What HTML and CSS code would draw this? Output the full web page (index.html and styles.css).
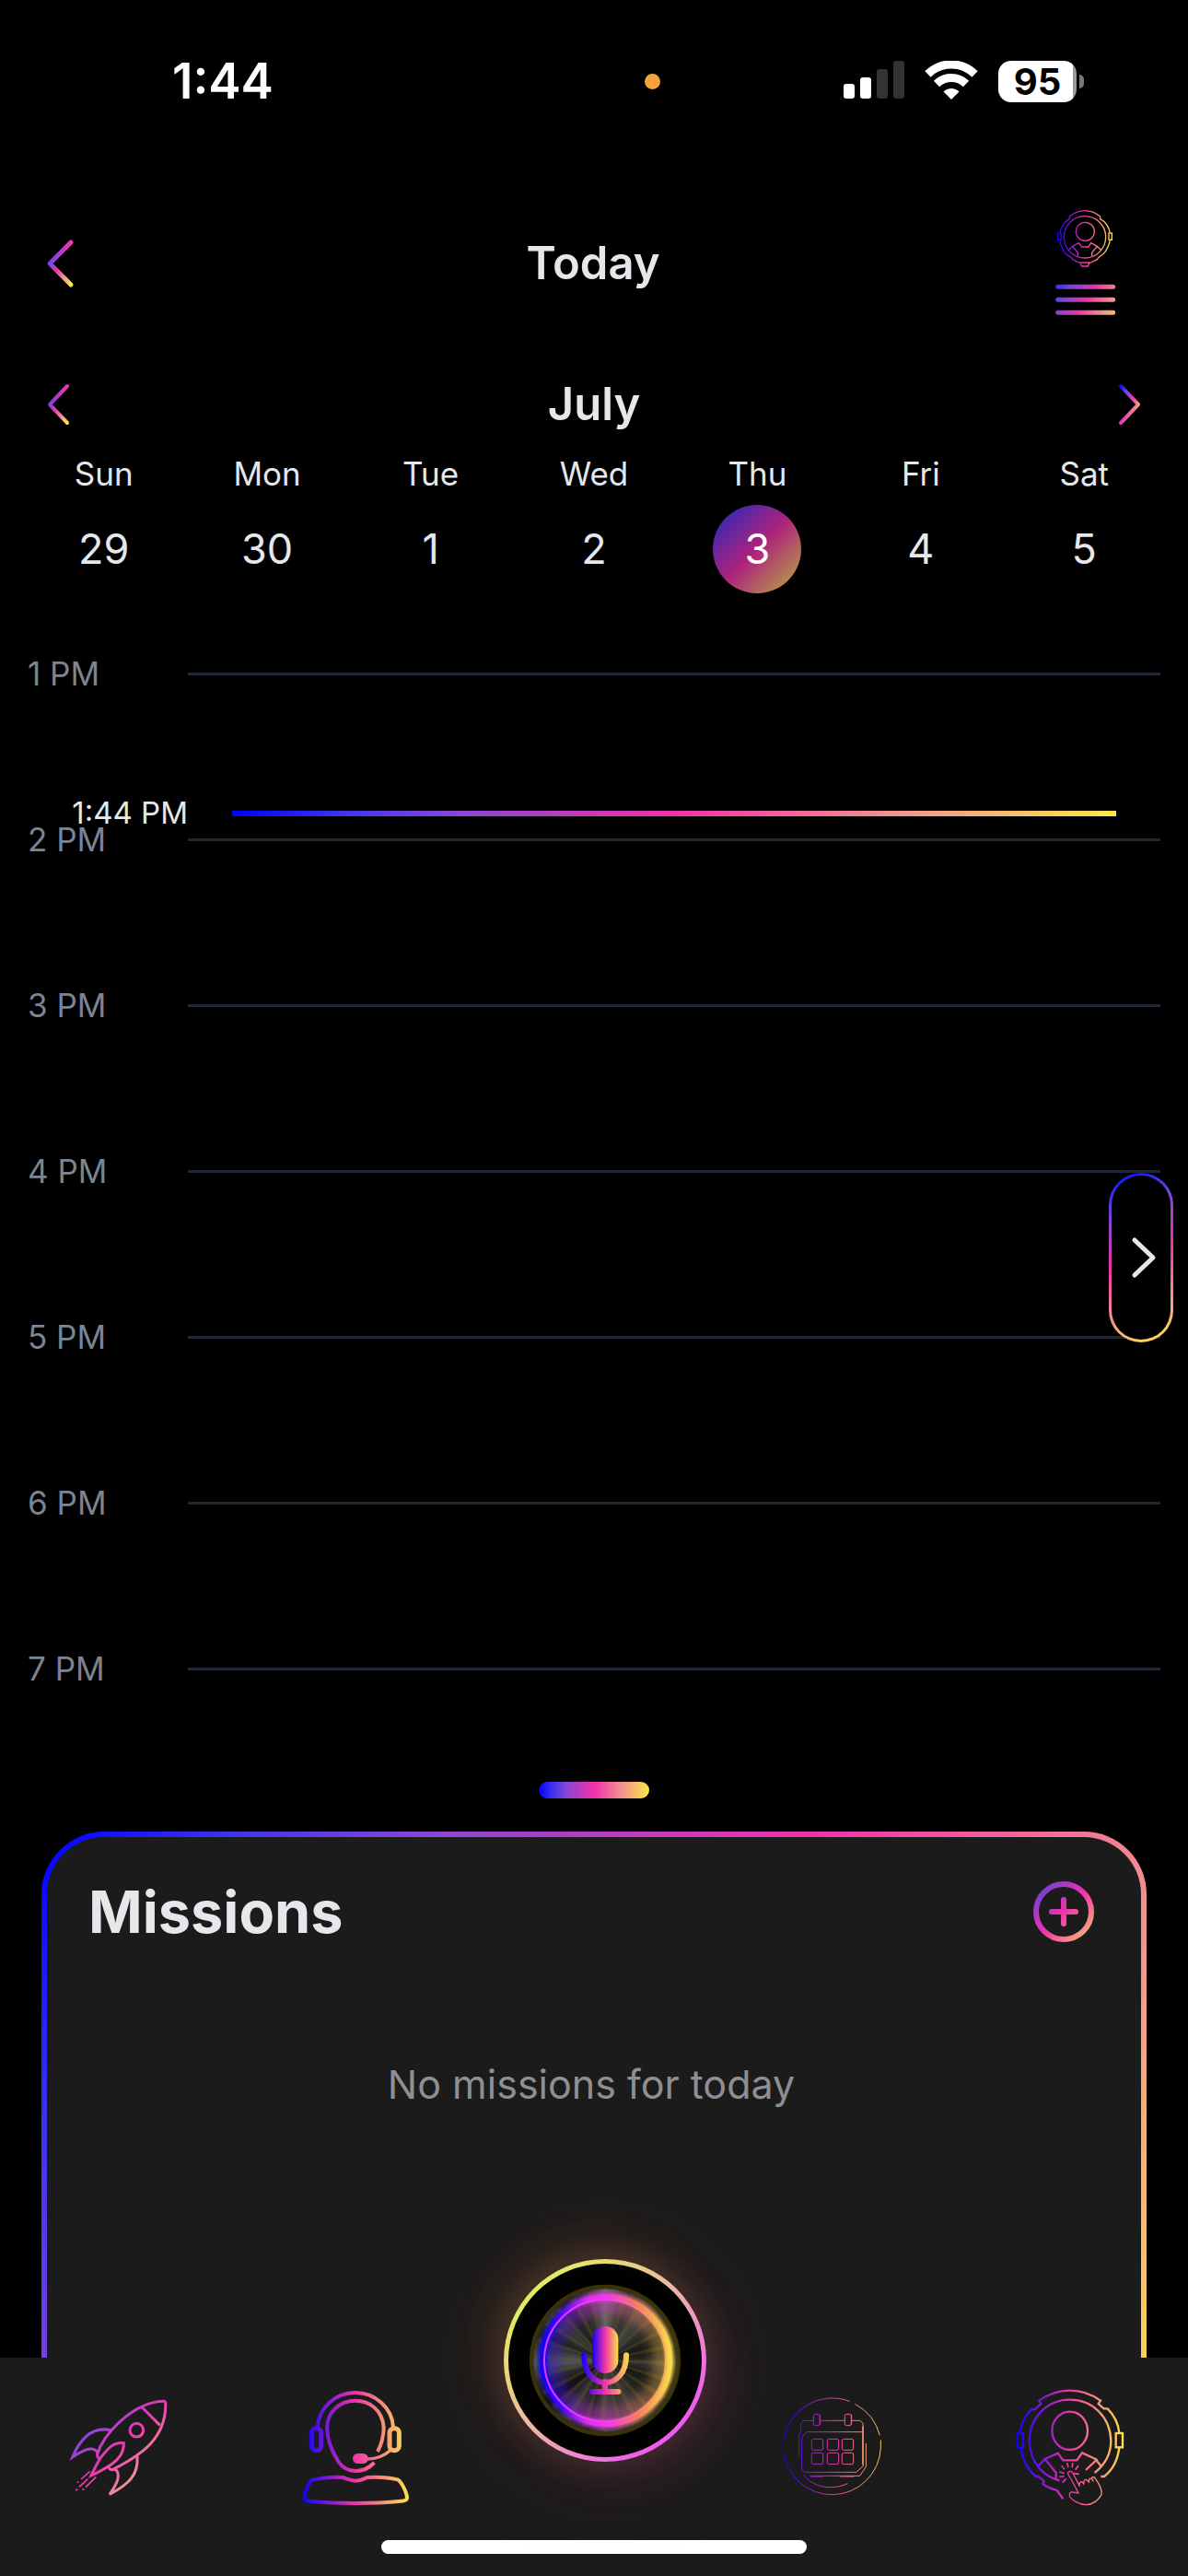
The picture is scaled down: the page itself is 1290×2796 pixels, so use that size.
FILE: index.html
```html
<!DOCTYPE html>
<html lang="en">
<head>
<meta charset="utf-8">
<meta name="viewport" content="width=device-width, initial-scale=1">
<title>Today</title>
<link rel="stylesheet" href="styles.css">
</head>
<body>
<svg class="defs" aria-hidden="true">
  <defs>
    <linearGradient id="flat" gradientUnits="userSpaceOnUse" x1="55" y1="0" x2="405" y2="0">
      <stop offset="0" stop-color="#0a00ff"/><stop offset=".5" stop-color="#f035a8"/><stop offset="1" stop-color="#fbe64a"/>
    </linearGradient>
    <linearGradient id="flat-logo" gradientUnits="userSpaceOnUse" x1="84" y1="0" x2="264" y2="0">
      <stop offset="0" stop-color="#0a00ff"/><stop offset=".5" stop-color="#f035a8"/><stop offset="1" stop-color="#fbe64a"/>
    </linearGradient>
    <linearGradient id="lines" gradientUnits="userSpaceOnUse" x1="66" y1="260" x2="294" y2="420">
      <stop offset="0" stop-color="#0f10ff"/><stop offset=".25" stop-color="#6a46e0"/><stop offset=".5" stop-color="#f032aa"/><stop offset=".75" stop-color="#f2928f"/><stop offset="1" stop-color="#fde84a"/>
    </linearGradient>
    <linearGradient id="rocket" gradientUnits="userSpaceOnUse" x1="100" y1="100" x2="400" y2="400">
      <stop offset="0" stop-color="#0000ff"/><stop offset=".25" stop-color="#8746d6"/><stop offset=".5" stop-color="#f038b0"/><stop offset=".75" stop-color="#f4949a"/><stop offset="1" stop-color="#fde84a"/>
    </linearGradient>
    <linearGradient id="chev" x1="0" y1="0" x2="1" y2="1">
      <stop offset="0" stop-color="#0f10ff"/><stop offset=".25" stop-color="#7546dc"/><stop offset=".5" stop-color="#ee36b0"/><stop offset=".75" stop-color="#f2928f"/><stop offset="1" stop-color="#fde84a"/>
    </linearGradient>
    <linearGradient id="plus" gradientUnits="userSpaceOnUse" x1="0" y1="0" x2="66" y2="66">
      <stop offset="0" stop-color="#4b44e6"/><stop offset=".5" stop-color="#f032aa"/><stop offset="1" stop-color="#f8d070"/>
    </linearGradient>
    <linearGradient id="mic" gradientUnits="userSpaceOnUse" x1="395" y1="0" x2="548" y2="0">
      <stop offset="0" stop-color="#1200ff"/><stop offset=".5" stop-color="#f035a8"/><stop offset="1" stop-color="#fbe04a"/>
    </linearGradient>
    <linearGradient id="mic-body" gradientUnits="userSpaceOnUse" x1="429" y1="0" x2="514" y2="0">
      <stop offset="0" stop-color="#1200ff"/><stop offset=".5" stop-color="#f035a8"/><stop offset="1" stop-color="#fbe04a"/>
    </linearGradient>
    <linearGradient id="neon" gradientUnits="userSpaceOnUse" x1="255" y1="0" x2="695" y2="0">
      <stop offset="0" stop-color="#0a00ff"/><stop offset=".16" stop-color="#3a08ff"/><stop offset=".36" stop-color="#e030f0"/><stop offset=".52" stop-color="#f43ae8"/><stop offset=".72" stop-color="#f57a60"/><stop offset="1" stop-color="#fbe64a"/>
    </linearGradient>
    <linearGradient id="neon-core" gradientUnits="userSpaceOnUse" x1="265" y1="0" x2="685" y2="0">
      <stop offset="0" stop-color="#e43aff"/><stop offset=".5" stop-color="#f43af4"/><stop offset=".8" stop-color="#f5906a"/><stop offset="1" stop-color="#f8b858"/>
    </linearGradient>
    <filter id="soft" x="-20%" y="-20%" width="140%" height="140%"><feGaussianBlur stdDeviation="6"/></filter>
    <filter id="softer" x="-30%" y="-30%" width="160%" height="160%"><feGaussianBlur stdDeviation="20"/></filter>
  </defs>
</svg>

<div class="app">
  <div class="status">
    <div class="status-time">1:44</div>
    <span class="status-dot"></span>
    <div class="status-icons">
      <svg width="66" height="44" viewBox="0 0 66 44" aria-label="Signal">
        <g fill="#fff"><rect x="0" y="25" width="12" height="16" rx="3"/><rect x="18" y="18" width="12" height="23" rx="3"/></g>
        <g fill="#333"><rect x="36" y="9" width="12" height="32" rx="3"/><rect x="54" y="0" width="12" height="41" rx="3"/></g>
      </svg>
      <svg width="58" height="44" viewBox="0 0 58 44" aria-label="Wi-Fi">
        <g fill="none" stroke="#fff" stroke-width="9">
          <path d="M3.500 14.500A36 36 0 0 1 54.500 14.500"/><path d="M13 25A23 23 0 0 1 45 25"/>
        </g>
        <path d="M29 42 20.500 33.500A12 12 0 0 1 37.500 33.500Z" fill="#fff"/>
      </svg>
      <div class="battery"><span class="battery-level">95</span><span class="battery-nub"></span></div>
    </div>
  </div>

  <header class="header">
    <button class="icon-btn" type="button" aria-label="Back">
      <svg width="34" height="58" viewBox="0 0 34 58"><path d="M29 6 6 29 29 52" fill="none" stroke="url(#chev)" stroke-width="5" stroke-linecap="round" stroke-linejoin="round"/></svg>
    </button>
    <h1 class="title">Today</h1>
    <button class="icon-btn icon-btn-end" type="button" aria-label="Menu">
      <svg width="120" height="150" viewBox="0 0 360 450" fill="none" stroke="url(#flat-logo)" stroke-width="4">
        <path d="M124 80V72Q148 53 174 53T224 72V80L236 88Q252 104 256 126M256 150Q250 176 236 192L218 206 214 212 188 224 184 234H164L160 224 134 212 130 206 112 194Q98 178 92 150M92 126Q98 100 112 88L124 80"/>
        <rect x="86" y="126" width="10" height="22"/><rect x="252" y="126" width="10" height="22"/>
        <circle cx="174" cy="139" r="68"/><circle cx="175" cy="121" r="30"/>
        <path d="M120 182 134 169 154 158 164 171H185L194 158 214 169 228 182M134 169 151 190V202M214 169 197 190V202M158 222H190"/>
        <g stroke="url(#lines)" stroke-width="15" stroke-linecap="round"><path d="M86 301H266M86 343H266M86 385H266"/></g>
      </svg>
    </button>
  </header>

  <div class="month">
    <button class="icon-btn" type="button" aria-label="Previous week">
      <svg width="26" height="46" viewBox="0 0 26 46"><path d="M22 3 3 23 22 43" fill="none" stroke="url(#chev)" stroke-width="4" stroke-linecap="round" stroke-linejoin="round"/></svg>
    </button>
    <h2 class="title">July</h2>
    <button class="icon-btn icon-btn-end" type="button" aria-label="Next week">
      <svg width="26" height="46" viewBox="0 0 26 46"><path d="M4 3 23 23 4 43" fill="none" stroke="url(#chev)" stroke-width="4" stroke-linecap="round" stroke-linejoin="round"/></svg>
    </button>
  </div>

  <div class="week">
    <button class="day" type="button"><span>Sun</span><span class="num">29</span></button>
    <button class="day" type="button"><span>Mon</span><span class="num">30</span></button>
    <button class="day" type="button"><span>Tue</span><span class="num">1</span></button>
    <button class="day" type="button"><span>Wed</span><span class="num">2</span></button>
    <button class="day" type="button" aria-current="date"><span>Thu</span><span class="num num-today">3</span></button>
    <button class="day" type="button"><span>Fri</span><span class="num">4</span></button>
    <button class="day" type="button"><span>Sat</span><span class="num">5</span></button>
  </div>

  <main class="timeline">
    <div class="hour"><span class="hour-label">1 PM</span><span class="rule"></span></div>
    <div class="hour"><span class="hour-label">2 PM</span><span class="rule"></span></div>
    <div class="hour"><span class="hour-label">3 PM</span><span class="rule"></span></div>
    <div class="hour"><span class="hour-label">4 PM</span><span class="rule"></span></div>
    <div class="hour"><span class="hour-label">5 PM</span><span class="rule"></span></div>
    <div class="hour"><span class="hour-label">6 PM</span><span class="rule"></span></div>
    <div class="hour"><span class="hour-label">7 PM</span><span class="rule"></span></div>
    <div class="now"><span class="now-label">1:44 PM</span><span class="now-line"></span></div>
    <button class="drawer" type="button" aria-label="Open panel">
      <svg width="28" height="46" viewBox="0 0 28 46"><path d="M4 4 24 23 4 42" fill="none" stroke="#e5e7eb" stroke-width="5" stroke-linecap="round" stroke-linejoin="round"/></svg>
    </button>
  </main>

  <section class="sheet">
    <div class="handle"></div>
    <div class="card">
      <div class="card-head">
        <h2 class="card-title">Missions</h2>
        <button class="icon-btn" type="button" aria-label="Add mission">
          <svg width="66" height="66" viewBox="0 0 66 66" fill="none" stroke="url(#plus)" stroke-width="6"><circle cx="33" cy="33" r="30"/><path d="M33 20V46M20 33H46" stroke-linecap="round"/></svg>
        </button>
      </div>
      <p class="empty">No missions for today</p>
    </div>
  </section>

  <nav class="tabs">
    <div class="tab-row">
      <a class="tab" href="#missions" aria-label="Missions">
        <svg viewBox="-3 0 480 510" fill="none" stroke="url(#rocket)" stroke-width="9" stroke-linejoin="miter">
          <path d="M389 109C330 108 282 138 240 176C212 202 180 238 167 282C166 288 170 294 176 297"/>
          <path d="M389 109C392 160 378 200 350 236C322 272 276 302 216 332C208 333 204 328 206 321"/>
          <path d="M313 129 371 187"/><circle cx="295" cy="203" r="22"/>
          <path d="M210 203C150 190 112 230 86 291C110 275 130 264 146 264C158 264 166 270 168 280"/>
          <path d="M297 288C302 350 268 380 207 412C226 386 236 366 235 350C234 338 228 332 222 331"/>
          <path d="M253 245C215 240 195 272 177 294C166 312 156 332 147 351C172 340 192 328 212 315C240 296 254 275 253 245Z"/>
          <g stroke-width="5"><path d="M143 337 114 363M136 362 108 388M163 355 129 389M106 370 102 374M124 394 118 398M103 396 97 399"/></g>
        </svg>
      </a>
      <a class="tab" href="#assistant" aria-label="Assistant">
        <svg viewBox="-6 0 480 510" fill="none" stroke="url(#flat)" stroke-width="12">
          <path d="M107 193C112 130 165 81 230 81C295 81 350 130 354 193"/>
          <rect x="88" y="197" width="31" height="72" rx="15" stroke-width="15"/><rect x="342" y="197" width="31" height="72" rx="15" stroke-width="15"/>
          <path d="M303 273C318 245 323 220 323 193C318 140 280 107 230 107C178 107 140 145 138 193C139 235 155 275 177 308C200 342 255 348 292 309"/>
          <path d="M346 268C325 287 300 297 270 297" stroke-width="10"/>
          <rect x="222" y="279" width="50" height="33" rx="16" fill="url(#flat)" stroke="none"/>
          <path d="M92 364C125 357 160 355 190 357C205 362 214 368 231 368C248 368 258 362 270 357C305 355 340 357 368 364C380 370 398 404 399 424C398 432 390 434 380 434C290 443 170 443 84 434C72 434 64 430 64 422C66 402 80 368 92 364Z"/>
        </svg>
      </a>
      <span></span>
      <a class="tab" href="#calendar" aria-label="Calendar">
        <svg viewBox="-21 -30 480 510" fill="none" stroke="url(#flat)" stroke-width="3">
          <path d="M278 79A160 160 0 0 0 62 217M62 240A159 159 0 0 0 379 232V205M376 190A160 160 0 0 0 295 88"/>
          <path d="M159 142H133Q119 143 119 158V176L113 188V260M184 142H261M285 142H308Q322 145 322 160V290L299 310H135Q122 306 122 294V196L138 179H320"/>
          <rect x="160" y="121" width="20" height="37" rx="6"/><rect x="262" y="121" width="21" height="37" rx="6"/><path d="M182 124V155M284 124V155M320 160V286"/>
          <path d="M331 216V292L311 322H147M127 317C160 364 225 368 271 347M150 324H190M245 324H292"/>
          <rect x="154" y="202" width="37" height="36" rx="6"/><rect x="205" y="202" width="37" height="36" rx="6"/><rect x="253" y="202" width="37" height="36" rx="6"/>
          <rect x="154" y="247" width="37" height="37" rx="6"/><rect x="205" y="247" width="37" height="37" rx="6"/><rect x="253" y="247" width="37" height="37" rx="6"/>
        </svg>
      </a>
      <a class="tab" href="#profile" aria-label="Profile">
        <svg viewBox="-12 0 480 510" fill="none" stroke="url(#flat)" stroke-width="7">
          <path d="M67 212C72 180 84 155 106 135H117L136 117 130 107C190 63 270 63 330 107L323 117 341 133H353C375 155 388 182 391 212"/>
          <rect x="58" y="213" width="20" height="46"/><rect x="380" y="213" width="22" height="46"/>
          <path d="M70 260C76 300 92 332 119 354H128L146 370 142 378C155 389 170 394 188 399L208 427M391 260C386 300 368 334 342 354H331"/>
          <path d="M311 342C345 315 364 280 364 238C362 160 304 104 230 104C154 104 98 165 98 238C100 310 145 355 196 367"/>
          <ellipse cx="230" cy="205" rx="58" ry="62"/>
          <path d="M126 322 149 297 191 278 208 301H253L270 277 313 297 333 322M149 297 185 342V364M320 297 282 333"/>
          <path d="M221 309 225 325M239 309 238 325M258 319 248 332M243 344 260 346M203 319 213 331M195 339 212 344M195 355 212 353M206 374 218 361" stroke-width="5"/>
          <path d="M258 408 236 366 224 346C222 335 236 334 240 343L262 386C258 372 270 364 276 380C273 364 285 358 293 374C290 358 300 356 307 370C294 354 308 352 314 362C328 382 336 400 333 412C325 432 300 447 282 446C262 446 240 432 231 422C226 410 230 404 238 405Z" fill="#1b1b1b" stroke-width="4"/>
        </svg>
      </a>
    </div>
    <div class="home-bar"></div>
    <button class="mic" type="button" aria-label="Speak">
      <span class="mic-disc"></span>
      <svg class="mic-art" viewBox="141 216 660 660" fill="none">
        <circle cx="471" cy="546" r="115" stroke="#6a6618" stroke-opacity=".3" stroke-width="224" pathLength="384" stroke-dasharray="5 11"/>
        <circle cx="471" cy="546" r="240" stroke="#383308" stroke-width="13"/>
        <circle cx="475" cy="546" r="180" stroke="url(#neon)" stroke-width="36" opacity=".55" filter="url(#softer)"/>
        <circle cx="475" cy="546" r="207" stroke="url(#neon)" stroke-width="26" filter="url(#soft)"/>
        <circle cx="475" cy="546" r="206" stroke="url(#neon)" stroke-width="18" opacity=".9"/>
        <circle cx="471" cy="546" r="198" stroke="url(#neon-core)" stroke-width="6"/>
        <rect x="429" y="435" width="85" height="153" rx="42" fill="url(#mic-body)"/>
        <path d="M403 529C401 648 541 648 540 529M471 615V647M429 648H514" stroke="url(#mic)" stroke-width="18" stroke-linecap="round"/>
      </svg>
    </button>
  </nav>
</div>
</body>
</html>
```
FILE: styles.css
```css
* { box-sizing: border-box; }

:root {
  --text: #e5e7eb;
  --surface: #1b1b1b;
  --brand: #0000ff 0%, #3c33ee 12%, #8746d6 25%, #f032aa 50%, #f2928f 75%, #fee64a 100%;
}

body {
  margin: 0;
  background: #000;
  color: var(--text);
  font-family: Inter, "Liberation Sans", sans-serif;
}

button {
  padding: 0;
  border: 0;
  background: none;
  color: inherit;
  font: inherit;
}

h1, h2, p { margin: 0; }
svg { display: block; }

.defs { position: absolute; width: 0; height: 0; }

.app {
  min-height: 100vh;
  display: flex;
  flex-direction: column;
}

/* Status bar */
.status {
  height: 176px;
  display: flex;
  align-items: center;
  color: #fff;
}
.status-time {
  width: 54.3%;
  padding-left: 187px;
  font-size: 53px;
  font-weight: 600;
}
.status-dot {
  width: 17px;
  height: 17px;
  border-radius: 50%;
  background: #f2a33c;
}
.status-icons {
  display: flex;
  align-items: center;
  gap: 22px;
  margin-left: auto;
  padding-right: 113px;
}
.battery { display: flex; align-items: center; gap: 3px; }
.battery-level {
  width: 85px;
  height: 45px;
  border-radius: 14px;
  background: linear-gradient(90deg, #fff 95%, #999 95%);
  color: #000;
  font-size: 40px;
  font-weight: 700;
  line-height: 45px;
  text-align: center;
}
.battery-nub {
  width: 5px;
  height: 15px;
  border-radius: 0 5px 5px 0;
  background: #777;
}

/* Header and month switcher */
.header, .month {
  display: grid;
  grid-template-columns: 1fr auto 1fr;
  align-items: center;
}
.header { height: 220px; padding: 0 50px 0 48px; }
.month { height: 86px; padding: 0 51px; }
.title { font-size: 49px; font-weight: 600; line-height: 60px; }
.icon-btn { justify-self: start; }
.icon-btn-end { justify-self: end; }

/* Week strip */
.week {
  display: grid;
  grid-template-columns: repeat(7, 1fr);
  padding: 10px 24px 0;
}
.day {
  display: flex;
  flex-direction: column;
  align-items: center;
  gap: 12px;
  font-size: 35px;
  line-height: 44px;
}
.num {
  width: 96px;
  border-radius: 50%;
  font-size: 45px;
  line-height: 96px;
}
.num-today {
  background: linear-gradient(135deg, #1c2ac0, #ad227c 50%, #b8b040);
  color: #fff;
}

/* Timeline */
.timeline {
  position: relative;
  display: flex;
  flex-direction: column;
  gap: 135px;
  padding: 65px 30px 0;
}
.hour {
  display: flex;
  align-items: center;
  color: #7b8490;
  font-size: 35px;
  line-height: 45px;
}
.hour-label { width: 174px; }
.rule { flex: 1; height: 3px; background: #1f2733; }

.now {
  position: absolute;
  top: 216px;
  left: 0;
  right: 78px;
  display: flex;
  align-items: center;
  gap: 48px;
  font-size: 33px;
  line-height: 45px;
}
.now-label { width: 204px; text-align: right; }
.now-line {
  flex: 1;
  height: 6px;
  background: linear-gradient(90deg, var(--brand));
}

.drawer {
  position: absolute;
  top: 629px;
  right: 16px;
  width: 70px;
  height: 184px;
  display: grid;
  place-items: center;
  padding-left: 6px;
  border: 3px solid transparent;
  border-radius: 35px;
  background:
    linear-gradient(#000, #000) padding-box,
    linear-gradient(159deg, var(--brand)) border-box;
}

/* Missions sheet */
.sheet {
  flex: 1;
  display: flex;
  flex-direction: column;
  gap: 36px;
  padding: 100px 45px 0;
}
.handle {
  align-self: center;
  width: 120px;
  height: 18px;
  border-radius: 9px;
  background: linear-gradient(90deg, var(--brand));
}
.card {
  flex: 1;
  padding: 48px 51px 48px 45px;
  border: 6px solid transparent;
  border-bottom: 0;
  border-radius: 68px 68px 0 0;
  background:
    linear-gradient(var(--surface), var(--surface)) padding-box,
    linear-gradient(122deg, var(--brand)) 0 0 / 100% 759px no-repeat border-box;
}
.card-head {
  display: flex;
  align-items: center;
  justify-content: space-between;
}
.card-title { font-size: 63px; font-weight: 700; line-height: 66px; }
.empty {
  margin-top: 127px;
  color: #8e8e93;
  font-size: 43px;
  line-height: 54px;
  text-align: center;
}

/* Tab bar */
.tabs {
  position: relative;
  padding: 11px 0 24px;
  background: var(--surface);
}
.tab-row { display: grid; grid-template-columns: repeat(5, 1fr); }
.tab { justify-self: center; width: 160px; height: 170px; }
.home-bar {
  width: 462px;
  height: 15px;
  margin: 17px auto 0;
  border-radius: 8px;
  background: #fff;
}
.mic {
  position: absolute;
  top: -107px;
  left: calc(50% - 98px);
  width: 220px;
  height: 220px;
  border: 5px solid transparent;
  border-radius: 50%;
  background:
    radial-gradient(circle, #000 62%, #0c0c06) padding-box,
    linear-gradient(135deg, #e2ec60 15%, #eeb4a8 50%, #ee58f0 85%) border-box;
  box-shadow:
    -10px -12px 45px rgba(170, 120, 50, 0.25),
    12px 12px 50px rgba(170, 70, 140, 0.2),
    0 0 120px rgba(150, 60, 50, 0.2);
}
.mic-disc {
  position: absolute;
  inset: 27px;
  border-radius: 50%;
  background: conic-gradient(#666, #333 5%, #3a3a3a 8%, #444 10%, #222 17%, #181818 22%, #333 26%, #181818 30%, #222 36%, #3c3c3c 42%, #333 46%, #444 50%, #222 54%, #333 60%, #111 65%, #2a2a2a 70%, #555 74%, #444 77%, #222 81%, #3a3a3a 86%, #222 90%, #333 96%, #666);
}
.mic-art { position: absolute; inset: -5px; }
```
